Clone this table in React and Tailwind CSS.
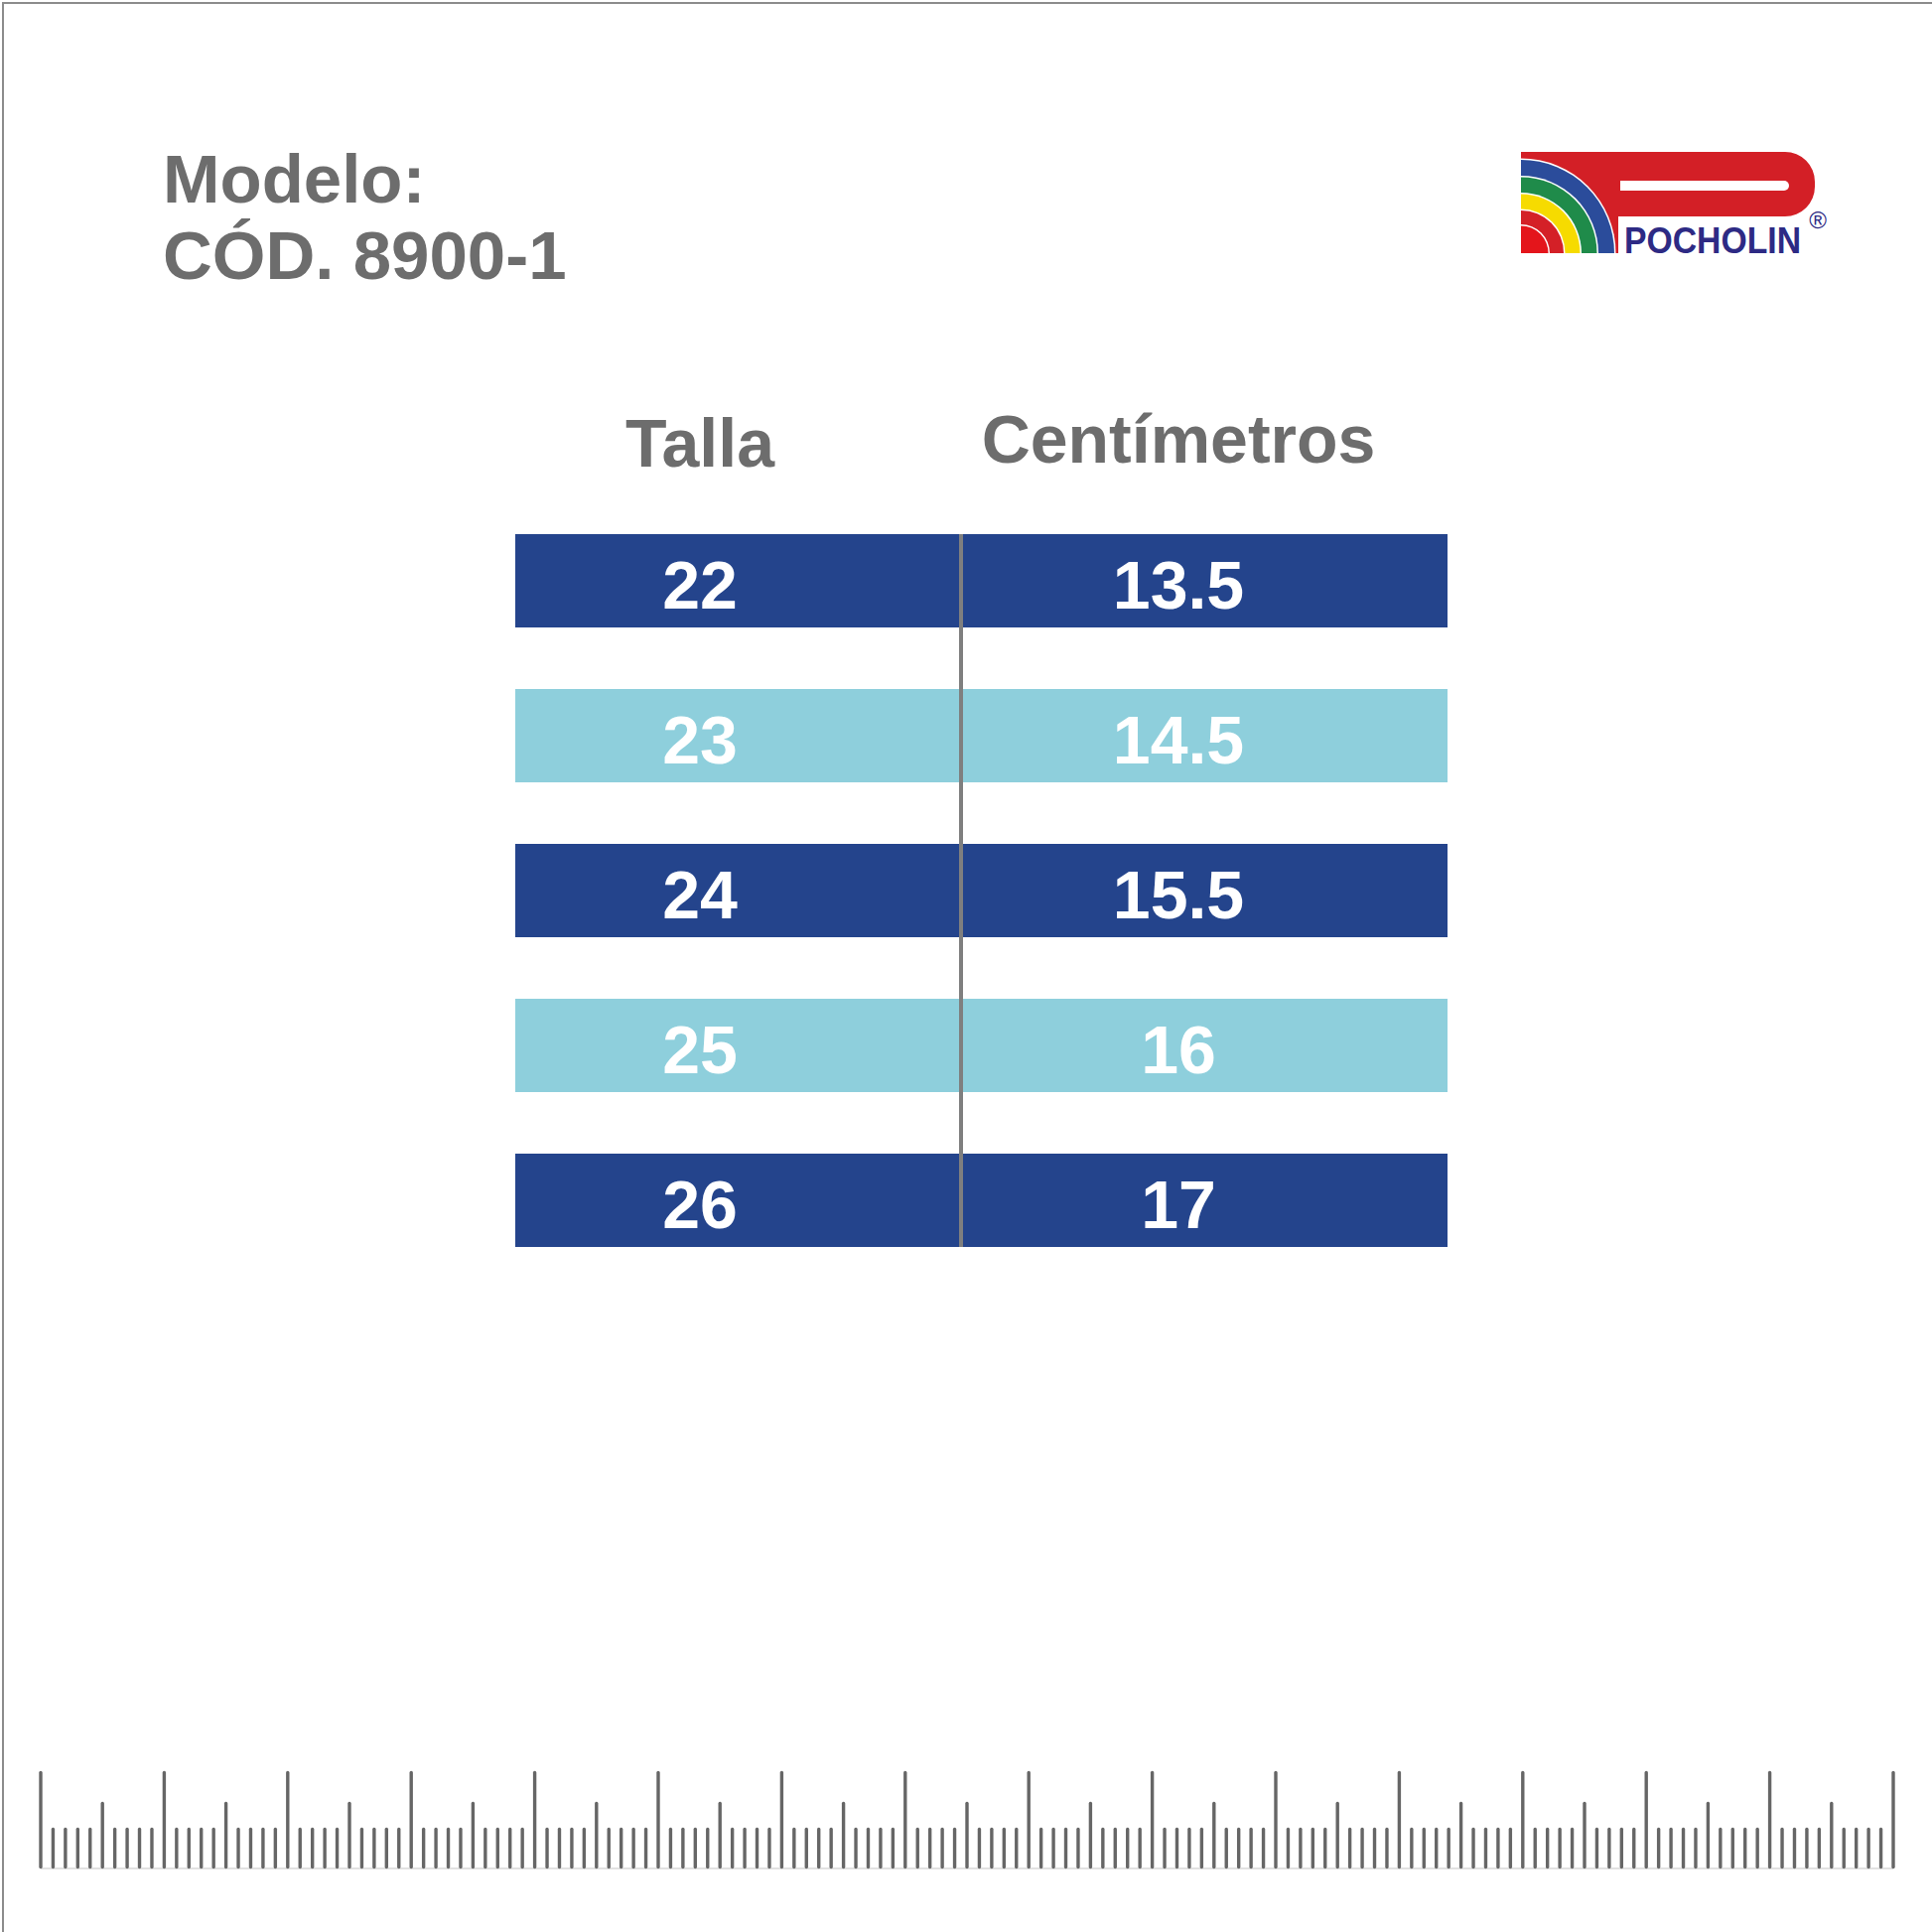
import React from 'react'

const rows = [
  { talla: '22', cm: '13.5', dark: true },
  { talla: '23', cm: '14.5', dark: false },
  { talla: '24', cm: '15.5', dark: true },
  { talla: '25', cm: '16', dark: false },
  { talla: '26', cm: '17', dark: true },
]

function Logo() {
  // rainbow quarter circles, centred on the bottom-left corner
  const arc = (r) => `M0,102 L0,${102 - r} A${r},${r} 0 0 1 ${r},102 Z`
  const bands = [
    [95.5, '#ffffff'],
    [94, '#2b4c9b'],
    [78, '#ffffff'],
    [76.5, '#1f8b4a'],
    [61, '#ffffff'],
    [59.5, '#f6db00'],
    [44.5, '#ffffff'],
    [43, '#d42027'],
    [29, '#ffffff'],
    [27.5, '#e4151b'],
  ]
  return (
    <svg width="312" height="112" viewBox="0 0 312 112">
      <path d="M0,0 H266 A30,30 0 0 1 296,30 V35 A30,30 0 0 1 266,65 H98 V102 H0 Z" fill="#d31f26" />
      <path d="M100,29 H265 A5,5 0 0 1 265,39 H100 Z" fill="#ffffff" />
      {bands.map(([r, c], i) => (
        <path key={i} d={arc(r)} fill={c} />
      ))}
      <text
        x="104"
        y="102"
        fontFamily="'Liberation Sans', Arial, sans-serif"
        fontWeight="700"
        fontSize="37"
        fill="#2d2a84"
        textLength="178"
        lengthAdjust="spacingAndGlyphs"
      >
        POCHOLIN
      </text>
      <text
        x="299"
        y="77"
        textAnchor="middle"
        fontFamily="'Liberation Sans', Arial, sans-serif"
        fontSize="24"
        fill="#2d2a84"
      >
        ®
      </text>
    </svg>
  )
}

function Ruler() {
  const ticks = []
  for (let i = 0; i <= 150; i++) {
    const x = 37 + i * 12.44
    const top = i % 10 === 0 ? 5.5 : i % 5 === 0 ? 36.5 : 62.5
    ticks.push(<line key={i} x1={x} x2={x} y1={top} y2={100.5} stroke="#666666" strokeWidth="3.4" strokeLinecap="round" />)
  }
  return (
    <svg width="1942" height="106" viewBox="0 0 1942 106">
      <line x1="37" x2="1903" y1="102" y2="102" stroke="#c4c4c4" strokeWidth="1" />
      {ticks}
    </svg>
  )
}

export default function App() {
  return (
    <div className="w-[1946px] h-[1946px] bg-white pt-[2px] pl-[2px] font-['Liberation_Sans',Arial,sans-serif]">
      <div className="h-full border-t-2 border-l-2 border-[#8c8c8c] flex flex-col">
        {/* header */}
        <div className="flex items-start">
          <div className="pl-[160px] pt-[138px] text-[69px] leading-[77px] font-bold text-[#6d6d6d]">
            <div>Modelo:</div>
            <div>CÓD. 8900-1</div>
          </div>
          <div className="ml-auto mr-[102px] mt-[149px] h-[104px]">
            <Logo />
          </div>
        </div>

        {/* column titles */}
        <div className="flex items-start pl-[515px] mt-[108px] text-[68px] leading-[77px] font-bold text-[#6d6d6d]">
          <div className="w-[447px] pr-[75px] pt-[4px] text-center">Talla</div>
          <div className="w-[492px] pl-[4px] pr-[54px] text-center">Centímetros</div>
        </div>

        {/* size table */}
        <div className="flex pl-[515px] mt-[53px]">
          <div className="w-[447px] flex flex-col gap-[62px]">
            {rows.map((r) => (
              <div
                key={r.talla}
                className={`h-[94px] pt-[4px] pr-[75px] text-center text-[68px] leading-[94px] font-bold text-white ${r.dark ? 'bg-[#24448c]' : 'bg-[#8ecfdc]'}`}
              >
                {r.talla}
              </div>
            ))}
          </div>
          <div className="w-[492px] border-l-4 border-[#7f7f7f] flex flex-col gap-[62px]">
            {rows.map((r) => (
              <div
                key={r.cm}
                className={`h-[94px] pt-[4px] pr-[54px] text-center text-[68px] leading-[94px] font-bold text-white ${r.dark ? 'bg-[#24448c]' : 'bg-[#8ecfdc]'}`}
              >
                {r.cm}
              </div>
            ))}
          </div>
        </div>

        {/* ruler */}
        <div className="mt-[524px]">
          <Ruler />
        </div>
      </div>
    </div>
  )
}
